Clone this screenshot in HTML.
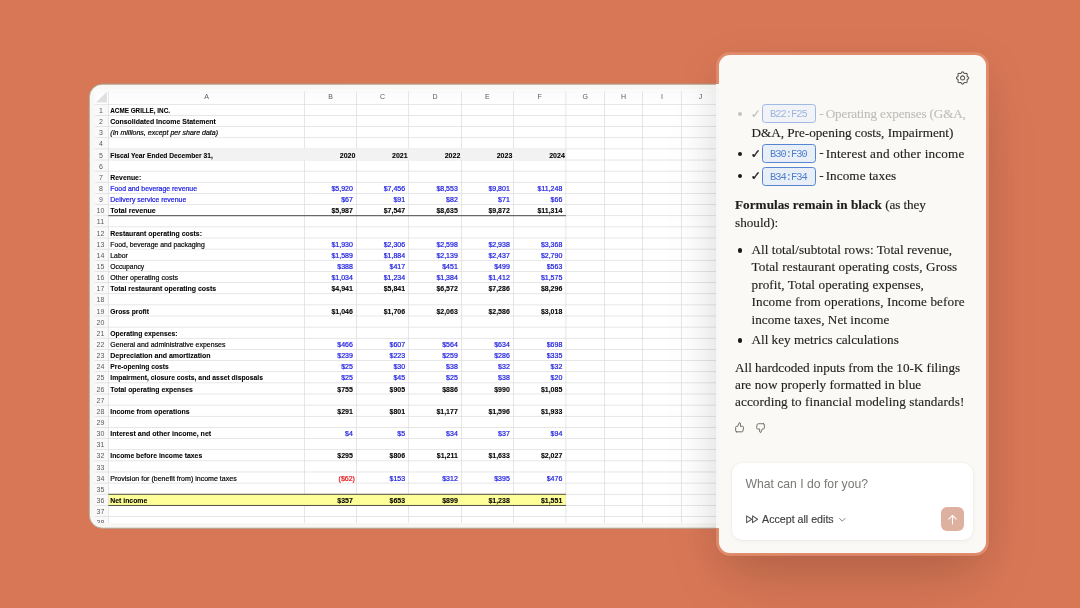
<!DOCTYPE html>
<html lang="en">
<head>
<meta charset="utf-8">
<title>Spreadsheet assistant</title>
<style>
*{box-sizing:border-box;margin:0;padding:0}
html,body{width:1080px;height:608px;overflow:hidden;background:#d87756}
body{position:relative;font-family:"Liberation Sans",sans-serif}
.sheet{will-change:transform;position:absolute;left:88px;top:83px;width:642px;height:447px;overflow:hidden}
.sheetsvg{display:block;position:absolute;left:0;top:0}
.sheetsvg text{font-family:"Liberation Sans",sans-serif;font-size:7px;fill:#000;stroke:#000;stroke-width:.18px}
.sheetsvg text.hd{fill:#5a5a5a;stroke:none;font-size:7px}
.sheetsvg text.b{font-weight:bold;stroke-width:.08px}
.sheetsvg text.i{font-style:italic}
.sheetsvg text.bl{fill:#1c1ce2;stroke:#1c1ce2;stroke-width:.22px}
.sheetsvg text.rd{fill:#e81010;stroke:#e81010;stroke-width:.2px}

.panel{position:absolute;left:718.75px;top:54.9px;width:267.35px;height:498px;background:#faf9f5;border-radius:11px;
  box-shadow:0 0 0 2.8px #e18b6d, 0 12px 44px 2px rgba(0,0,0,.10), 0 36px 70px -10px rgba(0,0,0,.11);
  font-family:"Liberation Serif",serif;color:#1f1e1c;font-size:13.2px;line-height:17.3px}
.ring{position:absolute;left:715.95px;top:84px;width:3.2px;height:444px;background:#f7f7f5}
.gear{position:absolute;left:236.15px;top:15.4px;width:15.2px;height:15.2px}
.msg,.msg ul,.msg li,.msg p{position:static;list-style:none}
.ln{-webkit-text-stroke:.14px #1f1e1c;position:absolute;white-space:nowrap;height:17.3px;line-height:17.3px;font-size:13.2px}
.ln b{font-weight:bold}
.fd{color:#bebdb9;-webkit-text-stroke-color:#bebdb9}
.ck.fd{-webkit-text-stroke-width:.1px}
.bu{position:absolute;width:4.5px;height:4.5px;border-radius:50%;background:#1b1a19;left:18.7px;margin-top:-.15px}
.ck{position:absolute;left:31.7px;margin-top:.4px;font-family:"DejaVu Sans","Liberation Sans",sans-serif;font-size:12px;line-height:12px;height:12px;font-weight:bold;-webkit-text-stroke:.45px currentColor}
.chip{position:absolute;left:43.05px;width:54.1px;height:18.7px;font-family:"Liberation Mono",monospace;font-size:10.4px;line-height:19.4px;letter-spacing:-0.95px;text-indent:-1.4px;text-align:center;color:#4f7fcc;background:#e9eff7;border:.7px solid #5585d2;border-radius:3.3px;white-space:nowrap}
.thumbs svg{position:absolute;overflow:visible}
.input{position:absolute;left:13.25px;top:408.3px;width:241px;height:77.1px;background:#fff;border-radius:10px;box-shadow:0 1px 5px rgba(0,0,0,.05),0 0 0 .5px rgba(0,0,0,.03)}
.sl{-webkit-text-stroke:.15px currentColor;position:absolute;white-space:nowrap;height:14px;line-height:14px;font-family:"Liberation Sans",sans-serif}
.ff{position:absolute;left:27.2px;top:460.2px;width:12.3px;height:8.5px;overflow:visible}
.chev{position:absolute;left:120.6px;top:462.7px;width:6.6px;height:3.8px;overflow:visible}
.send{position:absolute;left:222.2px;top:452.4px;width:22.9px;height:23.6px;border-radius:6px;background:#ddb0a0}
.send svg{position:absolute;left:4.85px;top:5.4px;width:13px;height:13px}
</style>
</head>
<body>
<div class="sheet">
<svg class="sheetsvg" width="642" height="447" viewBox="0 0 642 447">
<defs><linearGradient id="hg" x1="0" y1="0" x2="0" y2="1"><stop offset="0" stop-color="#fafafa"/><stop offset="1" stop-color="#ffffff"/></linearGradient></defs>
<rect x="1.3" y="1.15" width="640" height="444.05" rx="13" fill="#f8f7f3" stroke="#a5a594" stroke-opacity=".9" stroke-width="1"/>
<clipPath id="gc"><rect x="6.5" y="6.25" width="634.8" height="433.75"/></clipPath><g clip-path="url(#gc)">
<rect x="6.5" y="6.25" width="634.8" height="433.75" fill="#ffffff"/>
<rect x="6.5" y="21.3" width="13.9" height="418.7" fill="#f9f9f9"/>
<rect x="6.5" y="6.25" width="634.8" height="15.05" fill="url(#hg)"/>
<rect x="20.4" y="65.87" width="457.5" height="11.14" fill="#f2f2f2"/>
<rect x="20.4" y="411.27" width="457.5" height="11.14" fill="#ffff99"/>
<polygon points="8,19.6 18.9,19.6 18.9,8.8" fill="#dfdfdf"/>
<rect x="6.5" y="20.95" width="634.8" height="0.7" fill="#dcdcdc"/>
<rect x="6.5" y="32.09" width="634.8" height="0.7" fill="#dcdcdc"/>
<rect x="6.5" y="43.23" width="634.8" height="0.7" fill="#dcdcdc"/>
<rect x="6.5" y="54.38" width="634.8" height="0.7" fill="#dcdcdc"/>
<rect x="6.5" y="65.52" width="634.8" height="0.7" fill="#dcdcdc"/>
<rect x="6.5" y="76.66" width="634.8" height="0.7" fill="#dcdcdc"/>
<rect x="6.5" y="87.8" width="634.8" height="0.7" fill="#dcdcdc"/>
<rect x="6.5" y="98.94" width="634.8" height="0.7" fill="#dcdcdc"/>
<rect x="6.5" y="110.09" width="634.8" height="0.7" fill="#dcdcdc"/>
<rect x="6.5" y="121.23" width="634.8" height="0.7" fill="#dcdcdc"/>
<rect x="6.5" y="132.37" width="634.8" height="0.7" fill="#dcdcdc"/>
<rect x="6.5" y="143.51" width="634.8" height="0.7" fill="#dcdcdc"/>
<rect x="6.5" y="154.65" width="634.8" height="0.7" fill="#dcdcdc"/>
<rect x="6.5" y="165.8" width="634.8" height="0.7" fill="#dcdcdc"/>
<rect x="6.5" y="176.94" width="634.8" height="0.7" fill="#dcdcdc"/>
<rect x="6.5" y="188.08" width="634.8" height="0.7" fill="#dcdcdc"/>
<rect x="6.5" y="199.22" width="634.8" height="0.7" fill="#dcdcdc"/>
<rect x="6.5" y="210.36" width="634.8" height="0.7" fill="#dcdcdc"/>
<rect x="6.5" y="221.51" width="634.8" height="0.7" fill="#dcdcdc"/>
<rect x="6.5" y="232.65" width="634.8" height="0.7" fill="#dcdcdc"/>
<rect x="6.5" y="243.79" width="634.8" height="0.7" fill="#dcdcdc"/>
<rect x="6.5" y="254.93" width="634.8" height="0.7" fill="#dcdcdc"/>
<rect x="6.5" y="266.07" width="634.8" height="0.7" fill="#dcdcdc"/>
<rect x="6.5" y="277.22" width="634.8" height="0.7" fill="#dcdcdc"/>
<rect x="6.5" y="288.36" width="634.8" height="0.7" fill="#dcdcdc"/>
<rect x="6.5" y="299.5" width="634.8" height="0.7" fill="#dcdcdc"/>
<rect x="6.5" y="310.64" width="634.8" height="0.7" fill="#dcdcdc"/>
<rect x="6.5" y="321.78" width="634.8" height="0.7" fill="#dcdcdc"/>
<rect x="6.5" y="332.93" width="634.8" height="0.7" fill="#dcdcdc"/>
<rect x="6.5" y="344.07" width="634.8" height="0.7" fill="#dcdcdc"/>
<rect x="6.5" y="355.21" width="634.8" height="0.7" fill="#dcdcdc"/>
<rect x="6.5" y="366.35" width="634.8" height="0.7" fill="#dcdcdc"/>
<rect x="6.5" y="377.49" width="634.8" height="0.7" fill="#dcdcdc"/>
<rect x="6.5" y="388.64" width="634.8" height="0.7" fill="#dcdcdc"/>
<rect x="6.5" y="399.78" width="634.8" height="0.7" fill="#dcdcdc"/>
<rect x="6.5" y="410.92" width="634.8" height="0.7" fill="#dcdcdc"/>
<rect x="6.5" y="422.06" width="634.8" height="0.7" fill="#dcdcdc"/>
<rect x="6.5" y="433.2" width="634.8" height="0.7" fill="#dcdcdc"/>
<rect x="20.8" y="65.47" width="457.1" height="11.94" fill="#f2f2f2"/>
<rect x="20.8" y="410.87" width="457.1" height="11.94" fill="#ffff99"/>
<rect x="20.05" y="8.25" width="0.7" height="431.75" fill="#dcdcdc"/>
<rect x="216.25" y="8.25" width="0.7" height="57.32" fill="#dcdcdc"/>
<rect x="216.25" y="77.31" width="0.7" height="333.66" fill="#dcdcdc"/>
<rect x="216.25" y="422.71" width="0.7" height="17.29" fill="#dcdcdc"/>
<rect x="268.15" y="8.25" width="0.7" height="57.32" fill="#dcdcdc"/>
<rect x="268.15" y="77.31" width="0.7" height="333.66" fill="#dcdcdc"/>
<rect x="268.15" y="422.71" width="0.7" height="17.29" fill="#dcdcdc"/>
<rect x="320.35" y="8.25" width="0.7" height="57.32" fill="#dcdcdc"/>
<rect x="320.35" y="77.31" width="0.7" height="333.66" fill="#dcdcdc"/>
<rect x="320.35" y="422.71" width="0.7" height="17.29" fill="#dcdcdc"/>
<rect x="373.05" y="8.25" width="0.7" height="57.32" fill="#dcdcdc"/>
<rect x="373.05" y="77.31" width="0.7" height="333.66" fill="#dcdcdc"/>
<rect x="373.05" y="422.71" width="0.7" height="17.29" fill="#dcdcdc"/>
<rect x="425.05" y="8.25" width="0.7" height="57.32" fill="#dcdcdc"/>
<rect x="425.05" y="77.31" width="0.7" height="333.66" fill="#dcdcdc"/>
<rect x="425.05" y="422.71" width="0.7" height="17.29" fill="#dcdcdc"/>
<rect x="477.55" y="8.25" width="0.7" height="431.75" fill="#dcdcdc"/>
<rect x="516.15" y="8.25" width="0.7" height="431.75" fill="#dcdcdc"/>
<rect x="554.15" y="8.25" width="0.7" height="431.75" fill="#dcdcdc"/>
<rect x="592.95" y="8.25" width="0.7" height="431.75" fill="#dcdcdc"/>
<rect x="20.4" y="132.27" width="457.5" height="0.9" fill="#3a3a3a"/>
<rect x="20.4" y="410.82" width="457.5" height="0.9" fill="#3a3a3a"/>
<rect x="20.4" y="421.96" width="457.5" height="0.9" fill="#3a3a3a"/>
<text class="hd" x="118.5" y="16.3" text-anchor="middle">A</text>
<text class="hd" x="242.55" y="16.3" text-anchor="middle">B</text>
<text class="hd" x="294.6" y="16.3" text-anchor="middle">C</text>
<text class="hd" x="347.05" y="16.3" text-anchor="middle">D</text>
<text class="hd" x="399.4" y="16.3" text-anchor="middle">E</text>
<text class="hd" x="451.65" y="16.3" text-anchor="middle">F</text>
<text class="hd" x="497.2" y="16.3" text-anchor="middle">G</text>
<text class="hd" x="535.5" y="16.3" text-anchor="middle">H</text>
<text class="hd" x="573.9" y="16.3" text-anchor="middle">I</text>
<text class="hd" x="612.55" y="16.3" text-anchor="middle">J</text>
<text class="hd" x="12.9" y="30" text-anchor="middle">1</text>
<text class="hd" x="12.9" y="41" text-anchor="middle">2</text>
<text class="hd" x="12.9" y="52" text-anchor="middle">3</text>
<text class="hd" x="12.9" y="63" text-anchor="middle">4</text>
<text class="hd" x="12.9" y="75" text-anchor="middle">5</text>
<text class="hd" x="12.9" y="86" text-anchor="middle">6</text>
<text class="hd" x="12.9" y="97" text-anchor="middle">7</text>
<text class="hd" x="12.9" y="108" text-anchor="middle">8</text>
<text class="hd" x="12.9" y="119" text-anchor="middle">9</text>
<text class="hd" x="12.5" y="130" text-anchor="middle">10</text>
<text class="hd" x="12.5" y="141" text-anchor="middle">11</text>
<text class="hd" x="12.5" y="153" text-anchor="middle">12</text>
<text class="hd" x="12.5" y="164" text-anchor="middle">13</text>
<text class="hd" x="12.5" y="175" text-anchor="middle">14</text>
<text class="hd" x="12.5" y="186" text-anchor="middle">15</text>
<text class="hd" x="12.5" y="197" text-anchor="middle">16</text>
<text class="hd" x="12.5" y="208" text-anchor="middle">17</text>
<text class="hd" x="12.5" y="219" text-anchor="middle">18</text>
<text class="hd" x="12.5" y="231" text-anchor="middle">19</text>
<text class="hd" x="12.5" y="242" text-anchor="middle">20</text>
<text class="hd" x="12.5" y="253" text-anchor="middle">21</text>
<text class="hd" x="12.5" y="264" text-anchor="middle">22</text>
<text class="hd" x="12.5" y="275" text-anchor="middle">23</text>
<text class="hd" x="12.5" y="286" text-anchor="middle">24</text>
<text class="hd" x="12.5" y="297" text-anchor="middle">25</text>
<text class="hd" x="12.5" y="309" text-anchor="middle">26</text>
<text class="hd" x="12.5" y="320" text-anchor="middle">27</text>
<text class="hd" x="12.5" y="331" text-anchor="middle">28</text>
<text class="hd" x="12.5" y="342" text-anchor="middle">29</text>
<text class="hd" x="12.5" y="353" text-anchor="middle">30</text>
<text class="hd" x="12.5" y="364" text-anchor="middle">31</text>
<text class="hd" x="12.5" y="375" text-anchor="middle">32</text>
<text class="hd" x="12.5" y="387" text-anchor="middle">33</text>
<text class="hd" x="12.5" y="398" text-anchor="middle">34</text>
<text class="hd" x="12.5" y="409" text-anchor="middle">35</text>
<text class="hd" x="12.5" y="420" text-anchor="middle">36</text>
<text class="hd" x="12.5" y="431" text-anchor="middle">37</text>
<text class="hd" x="12.5" y="442" text-anchor="middle">38</text>
<text class="c b" x="22.3" y="30" textLength="59.7" lengthAdjust="spacingAndGlyphs">ACME GRILLE, INC.</text>
<text class="c b" x="22.3" y="41" textLength="105.5" lengthAdjust="spacingAndGlyphs">Consolidated Income Statement</text>
<text class="c i" x="22.3" y="52" textLength="107.7" lengthAdjust="spacingAndGlyphs">(In millions, except per share data)</text>
<text class="c b" x="22.3" y="75" textLength="102.5" lengthAdjust="spacingAndGlyphs">Fiscal Year Ended December 31,</text>
<text class="c b" x="267.4" y="75" text-anchor="end">2020</text>
<text class="c b" x="319.6" y="75" text-anchor="end">2021</text>
<text class="c b" x="372.3" y="75" text-anchor="end">2022</text>
<text class="c b" x="424.3" y="75" text-anchor="end">2023</text>
<text class="c b" x="476.8" y="75" text-anchor="end">2024</text>
<text class="c b" x="22.3" y="97" textLength="30.9" lengthAdjust="spacingAndGlyphs">Revenue:</text>
<text class="c bl" x="22.3" y="108" textLength="86.7" lengthAdjust="spacingAndGlyphs">Food and beverage revenue</text>
<text class="c bl" x="264.9" y="108" text-anchor="end">$5,920</text>
<text class="c bl" x="317.1" y="108" text-anchor="end">$7,456</text>
<text class="c bl" x="369.8" y="108" text-anchor="end">$8,553</text>
<text class="c bl" x="421.8" y="108" text-anchor="end">$9,801</text>
<text class="c bl" x="474.3" y="108" text-anchor="end">$11,248</text>
<text class="c bl" x="22.3" y="119" textLength="76" lengthAdjust="spacingAndGlyphs">Delivery service revenue</text>
<text class="c bl" x="264.9" y="119" text-anchor="end">$67</text>
<text class="c bl" x="317.1" y="119" text-anchor="end">$91</text>
<text class="c bl" x="369.8" y="119" text-anchor="end">$82</text>
<text class="c bl" x="421.8" y="119" text-anchor="end">$71</text>
<text class="c bl" x="474.3" y="119" text-anchor="end">$66</text>
<text class="c b" x="22.3" y="130" textLength="45.5" lengthAdjust="spacingAndGlyphs">Total revenue</text>
<text class="c b" x="264.9" y="130" text-anchor="end">$5,987</text>
<text class="c b" x="317.1" y="130" text-anchor="end">$7,547</text>
<text class="c b" x="369.8" y="130" text-anchor="end">$8,635</text>
<text class="c b" x="421.8" y="130" text-anchor="end">$9,872</text>
<text class="c b" x="474.3" y="130" text-anchor="end">$11,314</text>
<text class="c b" x="22.3" y="153" textLength="91.7" lengthAdjust="spacingAndGlyphs">Restaurant operating costs:</text>
<text class="c " x="22.3" y="164" textLength="94.4" lengthAdjust="spacingAndGlyphs">Food, beverage and packaging</text>
<text class="c bl" x="264.9" y="164" text-anchor="end">$1,930</text>
<text class="c bl" x="317.1" y="164" text-anchor="end">$2,306</text>
<text class="c bl" x="369.8" y="164" text-anchor="end">$2,598</text>
<text class="c bl" x="421.8" y="164" text-anchor="end">$2,938</text>
<text class="c bl" x="474.3" y="164" text-anchor="end">$3,368</text>
<text class="c " x="22.3" y="175" textLength="17.5" lengthAdjust="spacingAndGlyphs">Labor</text>
<text class="c bl" x="264.9" y="175" text-anchor="end">$1,589</text>
<text class="c bl" x="317.1" y="175" text-anchor="end">$1,884</text>
<text class="c bl" x="369.8" y="175" text-anchor="end">$2,139</text>
<text class="c bl" x="421.8" y="175" text-anchor="end">$2,437</text>
<text class="c bl" x="474.3" y="175" text-anchor="end">$2,790</text>
<text class="c " x="22.3" y="186" textLength="33.9" lengthAdjust="spacingAndGlyphs">Occupancy</text>
<text class="c bl" x="264.9" y="186" text-anchor="end">$388</text>
<text class="c bl" x="317.1" y="186" text-anchor="end">$417</text>
<text class="c bl" x="369.8" y="186" text-anchor="end">$451</text>
<text class="c bl" x="421.8" y="186" text-anchor="end">$499</text>
<text class="c bl" x="474.3" y="186" text-anchor="end">$563</text>
<text class="c " x="22.3" y="197" textLength="67.7" lengthAdjust="spacingAndGlyphs">Other operating costs</text>
<text class="c bl" x="264.9" y="197" text-anchor="end">$1,034</text>
<text class="c bl" x="317.1" y="197" text-anchor="end">$1,234</text>
<text class="c bl" x="369.8" y="197" text-anchor="end">$1,384</text>
<text class="c bl" x="421.8" y="197" text-anchor="end">$1,412</text>
<text class="c bl" x="474.3" y="197" text-anchor="end">$1,575</text>
<text class="c b" x="22.3" y="208" textLength="105.9" lengthAdjust="spacingAndGlyphs">Total restaurant operating costs</text>
<text class="c b" x="264.9" y="208" text-anchor="end">$4,941</text>
<text class="c b" x="317.1" y="208" text-anchor="end">$5,841</text>
<text class="c b" x="369.8" y="208" text-anchor="end">$6,572</text>
<text class="c b" x="421.8" y="208" text-anchor="end">$7,286</text>
<text class="c b" x="474.3" y="208" text-anchor="end">$8,296</text>
<text class="c b" x="22.3" y="231" textLength="38.7" lengthAdjust="spacingAndGlyphs">Gross profit</text>
<text class="c b" x="264.9" y="231" text-anchor="end">$1,046</text>
<text class="c b" x="317.1" y="231" text-anchor="end">$1,706</text>
<text class="c b" x="369.8" y="231" text-anchor="end">$2,063</text>
<text class="c b" x="421.8" y="231" text-anchor="end">$2,586</text>
<text class="c b" x="474.3" y="231" text-anchor="end">$3,018</text>
<text class="c b" x="22.3" y="253" textLength="67.2" lengthAdjust="spacingAndGlyphs">Operating expenses:</text>
<text class="c " x="22.3" y="264" textLength="115.2" lengthAdjust="spacingAndGlyphs">General and administrative expenses</text>
<text class="c bl" x="264.9" y="264" text-anchor="end">$466</text>
<text class="c bl" x="317.1" y="264" text-anchor="end">$607</text>
<text class="c bl" x="369.8" y="264" text-anchor="end">$564</text>
<text class="c bl" x="421.8" y="264" text-anchor="end">$634</text>
<text class="c bl" x="474.3" y="264" text-anchor="end">$698</text>
<text class="c b" x="22.3" y="275" textLength="100.2" lengthAdjust="spacingAndGlyphs">Depreciation and amortization</text>
<text class="c bl" x="264.9" y="275" text-anchor="end">$239</text>
<text class="c bl" x="317.1" y="275" text-anchor="end">$223</text>
<text class="c bl" x="369.8" y="275" text-anchor="end">$259</text>
<text class="c bl" x="421.8" y="275" text-anchor="end">$286</text>
<text class="c bl" x="474.3" y="275" text-anchor="end">$335</text>
<text class="c b" x="22.3" y="286" textLength="58.5" lengthAdjust="spacingAndGlyphs">Pre-opening costs</text>
<text class="c bl" x="264.9" y="286" text-anchor="end">$25</text>
<text class="c bl" x="317.1" y="286" text-anchor="end">$30</text>
<text class="c bl" x="369.8" y="286" text-anchor="end">$38</text>
<text class="c bl" x="421.8" y="286" text-anchor="end">$32</text>
<text class="c bl" x="474.3" y="286" text-anchor="end">$32</text>
<text class="c b" x="22.3" y="297" textLength="152.7" lengthAdjust="spacingAndGlyphs">Impairment, closure costs, and asset disposals</text>
<text class="c bl" x="264.9" y="297" text-anchor="end">$25</text>
<text class="c bl" x="317.1" y="297" text-anchor="end">$45</text>
<text class="c bl" x="369.8" y="297" text-anchor="end">$25</text>
<text class="c bl" x="421.8" y="297" text-anchor="end">$38</text>
<text class="c bl" x="474.3" y="297" text-anchor="end">$20</text>
<text class="c b" x="22.3" y="309" textLength="82.5" lengthAdjust="spacingAndGlyphs">Total operating expenses</text>
<text class="c b" x="264.9" y="309" text-anchor="end">$755</text>
<text class="c b" x="317.1" y="309" text-anchor="end">$905</text>
<text class="c b" x="369.8" y="309" text-anchor="end">$886</text>
<text class="c b" x="421.8" y="309" text-anchor="end">$990</text>
<text class="c b" x="474.3" y="309" text-anchor="end">$1,085</text>
<text class="c b" x="22.3" y="331" textLength="79.2" lengthAdjust="spacingAndGlyphs">Income from operations</text>
<text class="c b" x="264.9" y="331" text-anchor="end">$291</text>
<text class="c b" x="317.1" y="331" text-anchor="end">$801</text>
<text class="c b" x="369.8" y="331" text-anchor="end">$1,177</text>
<text class="c b" x="421.8" y="331" text-anchor="end">$1,596</text>
<text class="c b" x="474.3" y="331" text-anchor="end">$1,933</text>
<text class="c b" x="22.3" y="353" textLength="100.9" lengthAdjust="spacingAndGlyphs">Interest and other income, net</text>
<text class="c bl" x="264.9" y="353" text-anchor="end">$4</text>
<text class="c bl" x="317.1" y="353" text-anchor="end">$5</text>
<text class="c bl" x="369.8" y="353" text-anchor="end">$34</text>
<text class="c bl" x="421.8" y="353" text-anchor="end">$37</text>
<text class="c bl" x="474.3" y="353" text-anchor="end">$94</text>
<text class="c b" x="22.3" y="375" textLength="91.9" lengthAdjust="spacingAndGlyphs">Income before income taxes</text>
<text class="c b" x="264.9" y="375" text-anchor="end">$295</text>
<text class="c b" x="317.1" y="375" text-anchor="end">$806</text>
<text class="c b" x="369.8" y="375" text-anchor="end">$1,211</text>
<text class="c b" x="421.8" y="375" text-anchor="end">$1,633</text>
<text class="c b" x="474.3" y="375" text-anchor="end">$2,027</text>
<text class="c " x="22.3" y="398" textLength="126.4" lengthAdjust="spacingAndGlyphs">Provision for (benefit from) income taxes</text>
<text class="c rd" x="266.9" y="398" text-anchor="end">($62)</text>
<text class="c bl" x="317.1" y="398" text-anchor="end">$153</text>
<text class="c bl" x="369.8" y="398" text-anchor="end">$312</text>
<text class="c bl" x="421.8" y="398" text-anchor="end">$395</text>
<text class="c bl" x="474.3" y="398" text-anchor="end">$476</text>
<text class="c b" x="22.3" y="420" textLength="37" lengthAdjust="spacingAndGlyphs">Net income</text>
<text class="c b" x="264.9" y="420" text-anchor="end">$357</text>
<text class="c b" x="317.1" y="420" text-anchor="end">$653</text>
<text class="c b" x="369.8" y="420" text-anchor="end">$899</text>
<text class="c b" x="421.8" y="420" text-anchor="end">$1,238</text>
<text class="c b" x="474.3" y="420" text-anchor="end">$1,551</text>
</g></svg>
</div>
<div class="panel">
  <svg class="gear" viewBox="-7.6 -7.6 15.2 15.2" fill="none" stroke="#55544f" stroke-width="1.05" stroke-linejoin="round"><path d="M0.00 -5.72L0.40 -5.65L0.77 -5.44L1.07 -4.99L1.32 -4.53L1.59 -4.27L1.87 -4.11L2.18 -4.03L2.55 -4.02L3.06 -4.17L3.59 -4.28L4.00 -4.16L4.33 -3.93L4.56 -3.60L4.68 -3.19L4.57 -2.66L4.42 -2.15L4.43 -1.78L4.51 -1.47L4.67 -1.19L4.93 -0.92L5.39 -0.67L5.84 -0.37L6.05 0.00L6.12 0.40L6.05 0.80L5.84 1.17L5.39 1.47L4.93 1.72L4.67 1.99L4.51 2.27L4.43 2.58L4.42 2.95L4.57 3.46L4.68 3.99L4.56 4.40L4.33 4.73L4.00 4.96L3.59 5.08L3.06 4.97L2.55 4.82L2.18 4.83L1.87 4.91L1.59 5.07L1.32 5.33L1.07 5.79L0.77 6.24L0.40 6.45L0.00 6.52L-0.40 6.45L-0.77 6.24L-1.07 5.79L-1.32 5.33L-1.59 5.07L-1.87 4.91L-2.18 4.83L-2.55 4.82L-3.06 4.97L-3.59 5.08L-4.00 4.96L-4.33 4.73L-4.56 4.40L-4.68 3.99L-4.57 3.46L-4.42 2.95L-4.43 2.58L-4.51 2.27L-4.67 1.99L-4.93 1.72L-5.39 1.47L-5.84 1.17L-6.05 0.80L-6.12 0.40L-6.05 0.00L-5.84 -0.37L-5.39 -0.67L-4.93 -0.92L-4.67 -1.19L-4.51 -1.47L-4.43 -1.78L-4.42 -2.15L-4.57 -2.66L-4.68 -3.19L-4.56 -3.60L-4.33 -3.93L-4.00 -4.16L-3.59 -4.28L-3.06 -4.17L-2.55 -4.02L-2.18 -4.03L-1.87 -4.11L-1.59 -4.27L-1.32 -4.53L-1.07 -4.99L-0.77 -5.44L-0.40 -5.65Z"/><circle cx="0" cy="0.4" r="2.1"/></svg>
  <div class="msg" style="will-change:transform">
    <ul>
      <li><i class="bu" style="top:57px;background:#c4c3bf"></i><span class="ck fd" style="top:52.6px">✓</span> <span class="chip" style="top:49.4px;opacity:.55">B22:F25</span> <span class="ln fd" style="left:100.25px;top:48.59px;letter-spacing:0px">-</span> <span class="ln fd" style="left:106.65px;top:49.99px;letter-spacing:-0.16px">Operating expenses (G&amp;A,</span> <span class="ln " style="left:32.5px;top:69px;letter-spacing:-0.02px">D&amp;A, Pre-opening costs, Impairment)</span></li>
      <li><i class="bu" style="top:96.7px"></i><span class="ck" style="top:92.2px">✓</span> <span class="chip" style="top:89.1px">B30:F30</span> <span class="ln " style="left:100.25px;top:88.4px;letter-spacing:0px">-</span> <span class="ln " style="left:106.65px;top:89.9px;letter-spacing:0.18px">Interest and other income</span></li>
      <li><i class="bu" style="top:119px"></i><span class="ck" style="top:114.5px">✓</span> <span class="chip" style="top:112.1px">B34:F34</span> <span class="ln " style="left:100.25px;top:110.59px;letter-spacing:0px">-</span> <span class="ln " style="left:106.65px;top:112px;letter-spacing:0.06px">Income taxes</span></li>
    </ul>
    <p><span class="ln " style="left:16px;top:141.3px;letter-spacing:0.04px"><b>Formulas remain in black</b></span> <span class="ln " style="left:166.15px;top:141.3px;letter-spacing:-0.1px">(as they</span> <span class="ln " style="left:16px;top:158.9px;letter-spacing:0px">should):</span></p>
    <ul>
      <li><i class="bu" style="top:193.4px"></i><span class="ln " style="left:32.5px;top:185.8px;letter-spacing:0.02px">All total/subtotal rows: Total revenue,</span> <span class="ln " style="left:32.5px;top:203.39px;letter-spacing:0.09px">Total restaurant operating costs, Gross</span> <span class="ln " style="left:32.5px;top:220.69px;letter-spacing:0.08px">profit, Total operating expenses,</span> <span class="ln " style="left:32.5px;top:238.49px;letter-spacing:0.09px">Income from operations, Income before</span> <span class="ln " style="left:32.5px;top:255.79px;letter-spacing:0.04px">income taxes, Net income</span></li>
      <li><i class="bu" style="top:283.5px"></i><span class="ln " style="left:32.5px;top:276.3px;letter-spacing:-0.01px">All key metrics calculations</span></li>
    </ul>
    <p><span class="ln " style="left:16px;top:303.64px;letter-spacing:-0.03px">All hardcoded inputs from the 10-K filings</span> <span class="ln " style="left:16px;top:320.94px;letter-spacing:0.06px">are now properly formatted in blue</span> <span class="ln " style="left:16px;top:338.25px;letter-spacing:0.09px">according to financial modeling standards!</span></p>
  </div>
  <div class="thumbs">
    <svg style="left:16.1px;top:367.1px;width:9.2px;height:10.6px" preserveAspectRatio="none" viewBox="0 0 10 11.2" fill="none" stroke="#66655f" stroke-width="1" stroke-linecap="round" stroke-linejoin="round"><path d="M1.6 10.4H7.6Q8.5 10.4 8.7 9.5L9.3 6Q9.5 4.6 8.2 4.6H5.9L6 2.2Q6 0.7 4.7 0.6L2.8 4.7H1.6Q0.7 4.7 0.7 5.7V9.4Q0.7 10.4 1.6 10.4Z"/></svg>
    <svg style="left:37.2px;top:368.2px;width:9px;height:10.1px" preserveAspectRatio="none" viewBox="0 0 10 11.2" fill="none" stroke="#66655f" stroke-width="1" stroke-linecap="round" stroke-linejoin="round"><path d="M8.4 0.8H2.4Q1.5 0.8 1.3 1.7L0.7 5.2Q0.5 6.6 1.8 6.6H4.1L4 9Q4 10.5 5.3 10.6L7.2 6.5H8.4Q9.3 6.5 9.3 5.5V1.8Q9.3 0.8 8.4 0.8Z"/></svg>
  </div>
  <div class="input"></div>
  <span class="sl" style="-webkit-text-stroke-width:0;left:26.65px;top:422.27px;font-size:12.2px;letter-spacing:-0px;color:#7a7974">What can I do for you?</span>
  <svg class="ff" viewBox="0 0 11.6 8" preserveAspectRatio="none" fill="none" stroke="#555451" stroke-width=".95" stroke-linejoin="round"><path d="M0.6 0.8 5.4 4 0.6 7.2Z"/><path d="M6.2 0.8 11 4 6.2 7.2Z"/></svg>
  <span class="sl" style="left:43.35px;top:457.13px;font-size:10.6px;letter-spacing:0.02px;color:#3d3d3a">Accept all edits</span>
  <svg class="chev" viewBox="0 0 6.6 4" fill="none" stroke="#72716c" stroke-width=".95" stroke-linecap="round" stroke-linejoin="round"><path d="M0.5 0.5 3.3 3.4 6.1 0.5"/></svg>
  <div class="send"><svg viewBox="0 0 24 24" fill="none" stroke="#fff" stroke-width="2" stroke-linecap="round" stroke-linejoin="round"><path d="M12 20V4.5"/><path d="M5.2 11.3 12 4.5l6.8 6.8"/></svg></div>
</div>
<div class="ring"></div>
</body>
</html>
